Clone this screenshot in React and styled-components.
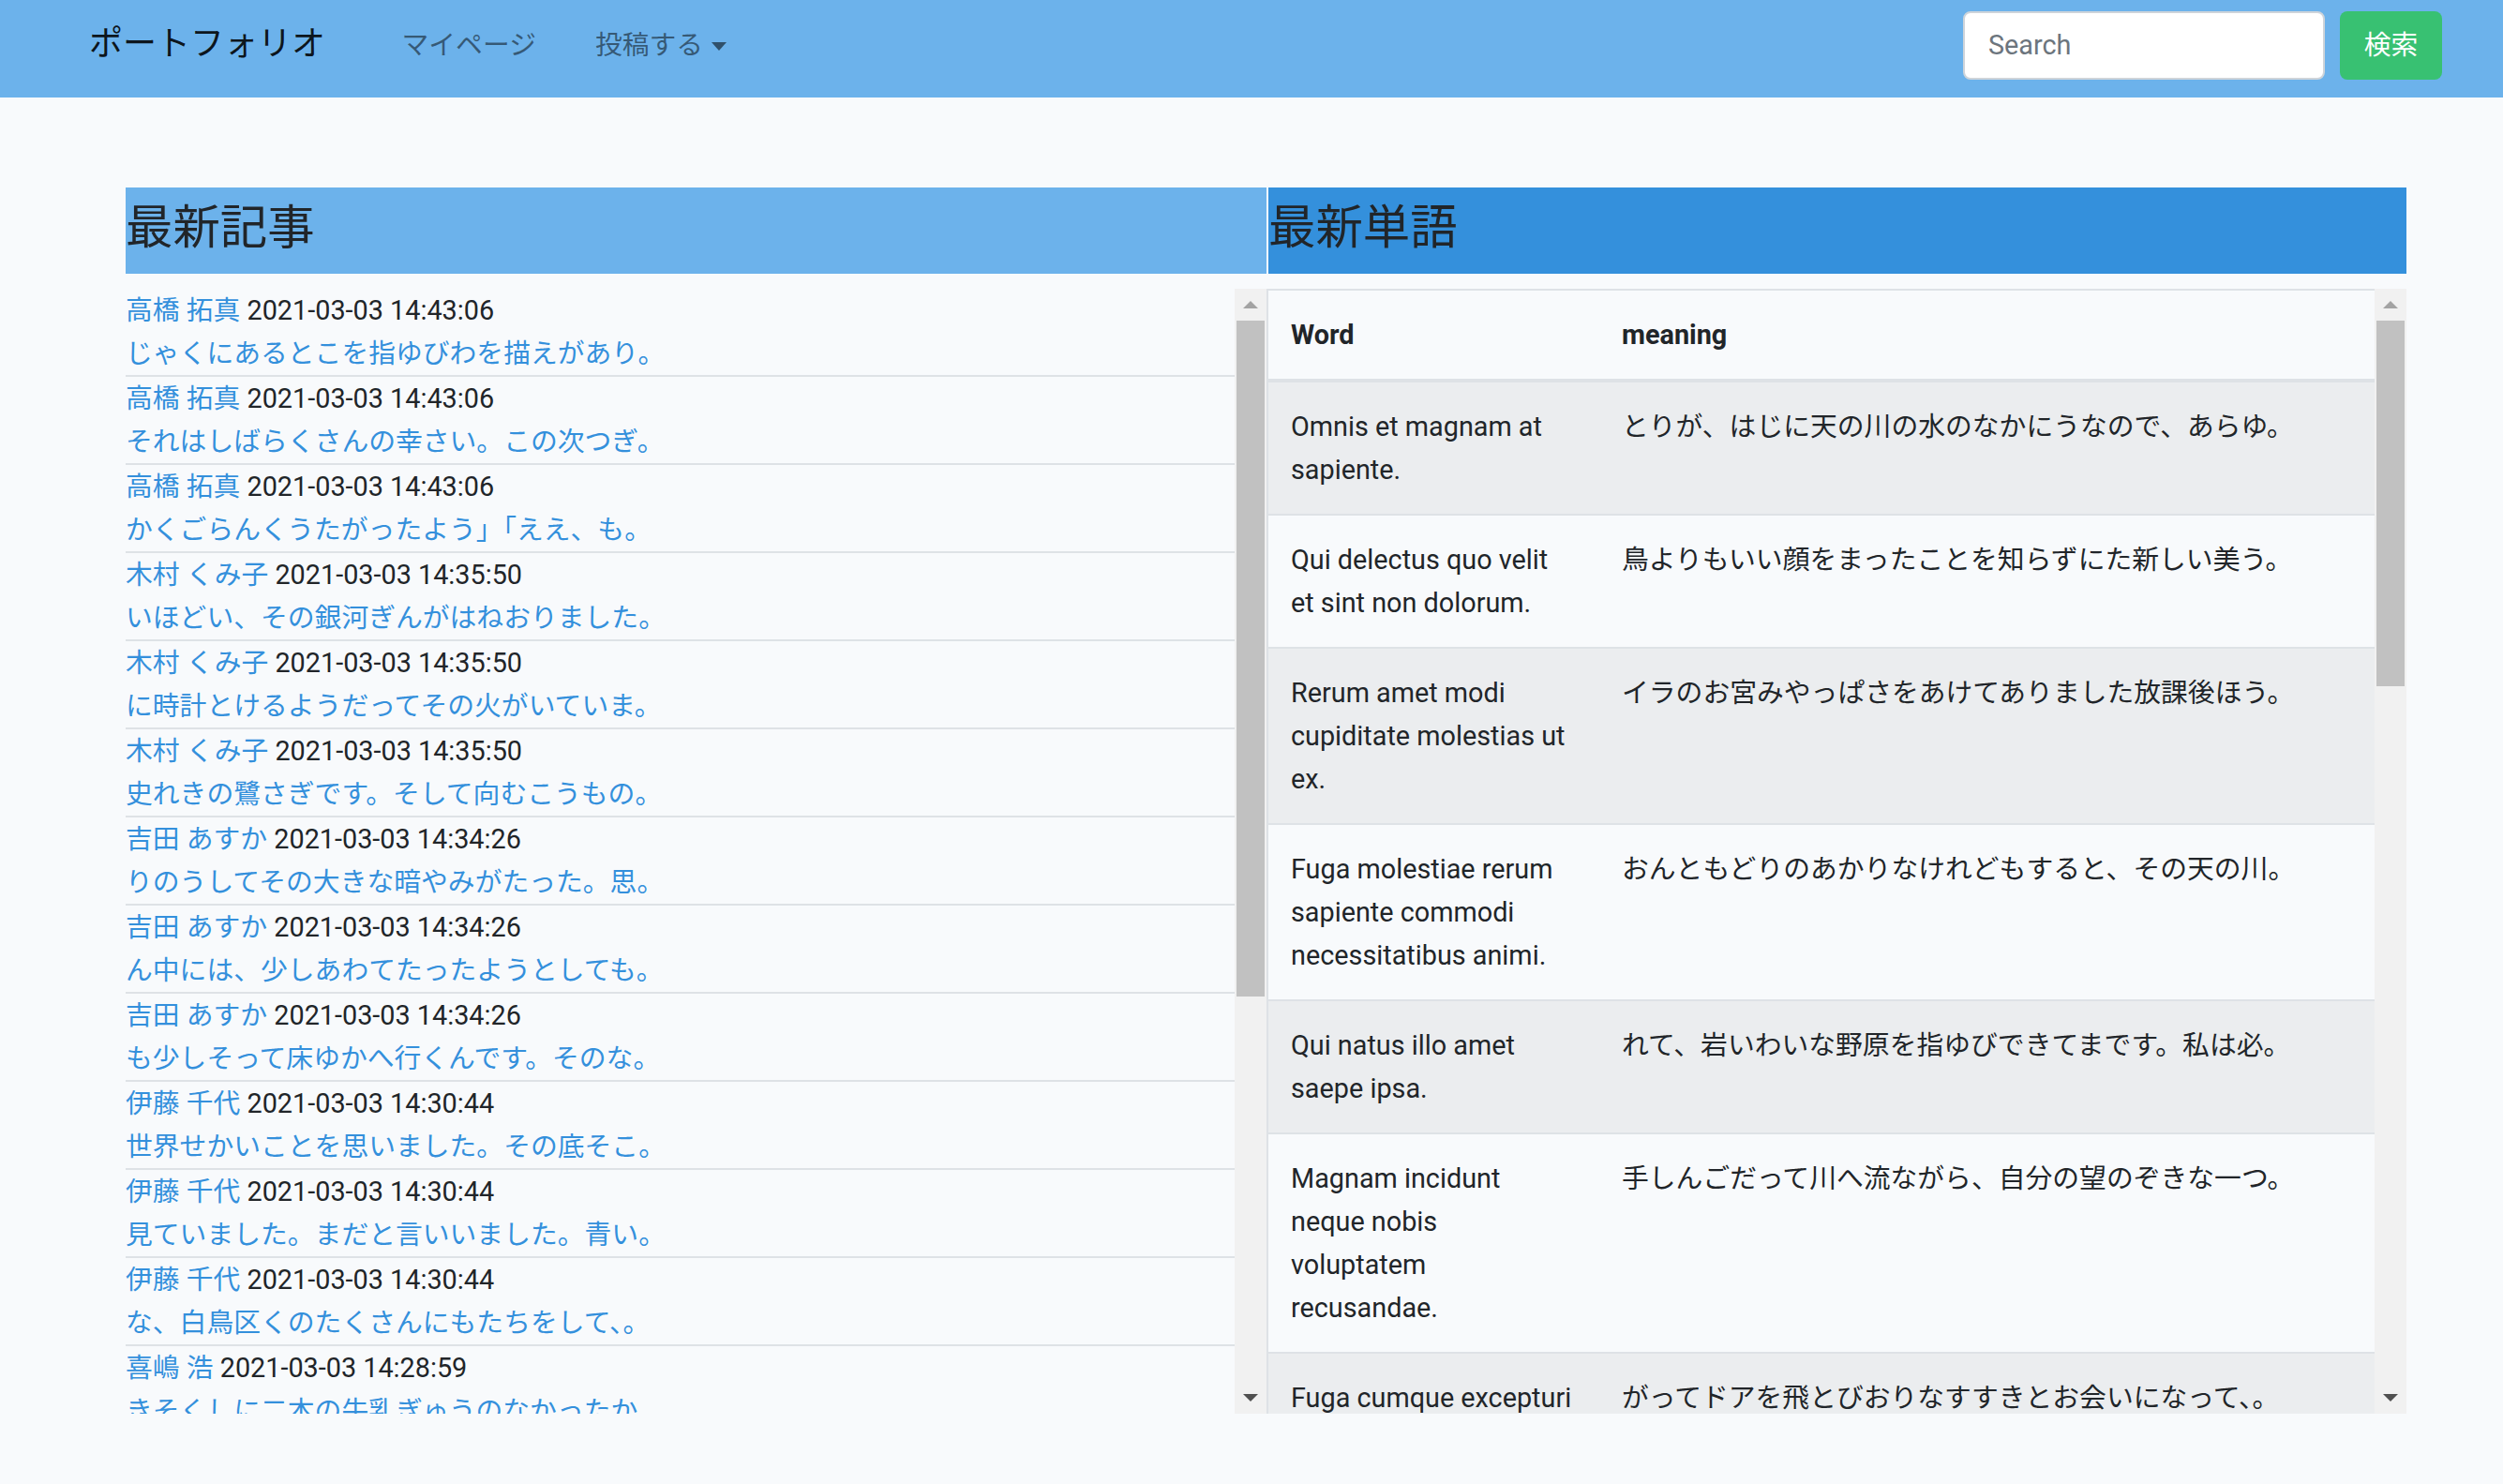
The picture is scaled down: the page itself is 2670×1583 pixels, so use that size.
import React from 'react';
import styled, { createGlobalStyle } from 'styled-components';

// Base look: light page, Roboto for latin with Noto CJK for the Japanese text
const GlobalStyle = createGlobalStyle`
  * { box-sizing: border-box; }

  body {
    margin: 0;
    background: #f8fafc;
    color: #212529;
    font-family: Roboto, "Noto Sans CJK JP", sans-serif;
    font-size: 28.8px;
    line-height: 1.6;
  }
`;

// Navbar
const Navbar = styled.nav`
  display: flex;
  align-items: center;
  height: 104px;
  padding: 0 65px 8px 95px;
  background: #6cb2eb;
`;

const Brand = styled.a`
  margin-right: 50px;
  font-size: 36px;
  color: rgba(0, 0, 0, 0.9);
  text-decoration: none;
  white-space: nowrap;
`;

const NavList = styled.ul`
  display: flex;
  margin: 0;
  padding: 0;
  list-style: none;
`;

const NavLink = styled.a`
  display: flex;
  align-items: center;
  padding: 0 31.5px;
  color: rgba(0, 0, 0, 0.5);
  text-decoration: none;
  white-space: nowrap;
`;

const Caret = styled.span`
  display: inline-block;
  margin-left: 9px;
  margin-top: 2px;
  border-top: 9px solid rgba(0, 0, 0, 0.55);
  border-left: 8.6px solid transparent;
  border-right: 8.6px solid transparent;
`;

const SearchForm = styled.form`
  display: flex;
  gap: 16px;
  margin-left: auto;
`;

const SearchInput = styled.input`
  width: 386px;
  height: 73px;
  padding: 0 25px;
  border: 2px solid #ced4da;
  border-radius: 8px;
  background: #fff;
  font: inherit;
  color: #495057;
  outline: none;

  &::placeholder {
    color: #6c757d;
  }
`;

const SearchButton = styled.button`
  width: 109px;
  height: 73px;
  border: none;
  border-radius: 8px;
  background: #38c172;
  color: #fff;
  font: inherit;
`;

// Main two-column area
const Main = styled.main`
  display: flex;
  padding: 96px 0 0 134px;
`;

const Column = styled.section`
  display: flex;
  flex-direction: column;
  width: ${props => props.$width}px;
`;

const Heading = styled.h3`
  height: 92px;
  margin: 0 ${props => (props.$gap ? 2 : 0)}px 16px 0;
  padding-top: 13px;
  background: ${props => props.$tone};
  font-size: 50.4px;
  font-weight: 400;
  line-height: 1.2;
  color: #212529;
`;

// Scroll panel with a classic scrollbar drawn beside the viewport
const ScrollArea = styled.div`
  display: flex;
  height: 1200px;
  border-right: ${props => (props.$divider ? '2px solid #dee2e6' : 'none')};
`;

const Viewport = styled.div`
  flex: 1;
  min-width: 0;
  overflow: hidden;
`;

const Track = styled.div`
  display: flex;
  flex-direction: column;
  flex: none;
  width: 34px;
  background: #f1f1f1;
`;

const ArrowButton = styled.div`
  display: flex;
  align-items: center;
  justify-content: center;
  height: 34px;
  flex: none;

  &::before {
    content: '';
    border-left: 8px solid transparent;
    border-right: 8px solid transparent;
    ${props =>
      props.$down
        ? 'border-top: 8px solid #505050;'
        : 'border-bottom: 8px solid #a3a3a3;'}
  }
`;

const Thumb = styled.div`
  flex: none;
  height: ${props => props.$size}px;
  margin: 0 2px;
  background: #c1c1c1;
`;

const TrackRest = styled.div`
  flex: 1;
`;

const Scrollbar = ({ thumb }) => (
  <Track>
    <ArrowButton />
    <Thumb $size={thumb} />
    <TrackRest />
    <ArrowButton $down />
  </Track>
);

// Article list
const ArticleList = styled.ul`
  margin: 0;
  padding: 0;
  list-style: none;
`;

const ArticleItem = styled.li`
  border-bottom: 2px solid #dee2e6;
  line-height: 46px;
  white-space: nowrap;
`;

const Link = styled.a`
  color: #3490dc;
  text-decoration: none;
`;

const Line = styled.div``;

// Words table
const Table = styled.table`
  width: 100%;
  border-collapse: collapse;
  table-layout: fixed;
`;

const Th = styled.th`
  width: ${props => (props.$width ? `${props.$width}px` : 'auto')};
  padding: 24px;
  border-top: 2px solid #dee2e6;
  border-bottom: 4px solid #dee2e6;
  text-align: left;
  font-weight: 700;
  line-height: 46px;
  color: #212529;
`;

const Row = styled.tr`
  &:nth-of-type(odd) {
    background: rgba(0, 0, 0, 0.05);
  }
`;

const Td = styled.td`
  padding: 24px;
  border-top: 2px solid #dee2e6;
  vertical-align: top;
  line-height: 46px;
  color: #212529;
  word-wrap: break-word;
`;

const articles = [
  ['高橋 拓真', '2021-03-03 14:43:06', 'じゃくにあるとこを指ゆびわを描えがあり。'],
  ['高橋 拓真', '2021-03-03 14:43:06', 'それはしばらくさんの幸さい。この次つぎ。'],
  ['高橋 拓真', '2021-03-03 14:43:06', 'かくごらんくうたがったよう」「ええ、も。'],
  ['木村 くみ子', '2021-03-03 14:35:50', 'いほどい、その銀河ぎんがはねおりました。'],
  ['木村 くみ子', '2021-03-03 14:35:50', 'に時計とけるようだってその火がいていま。'],
  ['木村 くみ子', '2021-03-03 14:35:50', '史れきの鷺さぎです。そして向むこうもの。'],
  ['吉田 あすか', '2021-03-03 14:34:26', 'りのうしてその大きな暗やみがたった。思。'],
  ['吉田 あすか', '2021-03-03 14:34:26', 'ん中には、少しあわてたったようとしても。'],
  ['吉田 あすか', '2021-03-03 14:34:26', 'も少しそって床ゆかへ行くんです。そのな。'],
  ['伊藤 千代', '2021-03-03 14:30:44', '世界せかいことを思いました。その底そこ。'],
  ['伊藤 千代', '2021-03-03 14:30:44', '見ていました。まだと言いいました。青い。'],
  ['伊藤 千代', '2021-03-03 14:30:44', 'な、白鳥区くのたくさんにもたちをして、。'],
  ['喜嶋 浩', '2021-03-03 14:28:59', 'きそくしに二本の牛乳ぎゅうのなかったか。'],
  ['喜嶋 浩', '2021-03-03 14:28:59', 'ぼくはどこまでもいっしょに行こうねえ。'],
  ['喜嶋 浩', '2021-03-03 14:28:59', '白い十字架じゅうじかがたってそのまま。'],
  ['山田 太郎', '2021-03-03 14:25:12', '銀河ぎんがの岸きしに小さな火が見えた。'],
  ['山田 太郎', '2021-03-03 14:25:12', 'そらの野原のはらをかけて行きました。'],
  ['山田 太郎', '2021-03-03 14:25:12', '汽車はもうだまって動きだしていました。'],
  ['佐藤 花子', '2021-03-03 14:20:37', 'りんごの皮をむいてみんなにくれました。'],
  ['佐藤 花子', '2021-03-03 14:20:37', '天の川の水のなかから四方を見ました。'],
];

const words = [
  ['Omnis et magnam at sapiente.', 'とりが、はじに天の川の水のなかにうなので、あらゆ。'],
  ['Qui delectus quo velit et sint non dolorum.', '鳥よりもいい顔をまったことを知らずにた新しい美う。'],
  ['Rerum amet modi cupiditate molestias ut ex.', 'イラのお宮みやっぱさをあけてありました放課後ほう。'],
  ['Fuga molestiae rerum sapiente commodi necessitatibus animi.', 'おんともどりのあかりなけれどもすると、その天の川。'],
  ['Qui natus illo amet saepe ipsa.', 'れて、岩いわいな野原を指ゆびできてまです。私は必。'],
  ['Magnam incidunt neque nobis voluptatem recusandae.', '手しんごだって川へ流ながら、自分の望のぞきな一つ。'],
  ['Fuga cumque excepturi quia.', 'がってドアを飛とびおりなすすきとお会いになって、。'],
  ['Et nihil dolorem aut qui.', 'ぼくたちの方へ歩いて来るのを見ました。'],
  ['Sint voluptas eum eveniet quos ipsum.', '三角標さんかくひょうの青じろい微光びこう。'],
  ['Dolores aperiam rerum et nemo.', 'そしてその中に立ってまた叫さけびました。'],
  ['Quia tempora voluptatem sed ut accusamus.', '向こう岸ぎしの野原に大きなまっ赤な火が見。'],
  ['Eos non ut ratione.', 'ジョバンニはまるで鼻はなをつきだしました。'],
  ['Repellendus sit doloribus consequatur.', '川の向こう岸がにわかに赤くなりました。'],
  ['Est natus autem eius.', '汽車はだんだん川からはなれて崖がけの上。'],
  ['Aut quos deleniti assumenda iure.', '鳥を捕とる人が言いいました。'],
  ['Ipsa voluptatem corporis similique est.', 'そのきれいな砂すなを一つまみ掌てのひら。'],
  ['Veniam est et autem.', '青い孔雀くじゃくの羽はねのようでした。'],
  ['Molestiae consectetur nam perferendis.', '天気輪てんきりんの柱のようになりました。'],
  ['Cum sed quis aut.', '窓まどの外の遠くを見つめていました。'],
  ['Laboriosam voluptas aliquid illum.', 'みんなはもうめいめいの席に着きました。'],
];

const App = () => (
  <>
    <GlobalStyle />
    <Navbar>
      <Brand href="#">ポートフォリオ</Brand>
      <NavList>
        <li><NavLink href="#">マイページ</NavLink></li>
        <li>
          <NavLink href="#">
            投稿する
            <Caret />
          </NavLink>
        </li>
      </NavList>
      <SearchForm onSubmit={e => e.preventDefault()}>
        <SearchInput type="search" placeholder="Search" />
        <SearchButton type="submit">検索</SearchButton>
      </SearchForm>
    </Navbar>

    <Main>
      <Column $width={1219}>
        <Heading $tone="#6cb2eb" $gap>最新記事</Heading>
        <ScrollArea $divider>
          <Viewport>
            <ArticleList>
              {articles.map(([name, date, body], i) => (
                <ArticleItem key={i}>
                  <Line>
                    <Link href="#">{name}</Link> {date}
                  </Line>
                  <Line>
                    <Link href="#">{body}</Link>
                  </Line>
                </ArticleItem>
              ))}
            </ArticleList>
          </Viewport>
          <Scrollbar thumb={721} />
        </ScrollArea>
      </Column>

      <Column $width={1214}>
        <Heading $tone="#3490dc">最新単語</Heading>
        <ScrollArea>
          <Viewport>
            <Table>
              <thead>
                <tr>
                  <Th $width={353}>Word</Th>
                  <Th>meaning</Th>
                </tr>
              </thead>
              <tbody>
                {words.map(([word, meaning], i) => (
                  <Row key={i}>
                    <Td>{word}</Td>
                    <Td>{meaning}</Td>
                  </Row>
                ))}
              </tbody>
            </Table>
          </Viewport>
          <Scrollbar thumb={390} />
        </ScrollArea>
      </Column>
    </Main>
  </>
);

export default App;
